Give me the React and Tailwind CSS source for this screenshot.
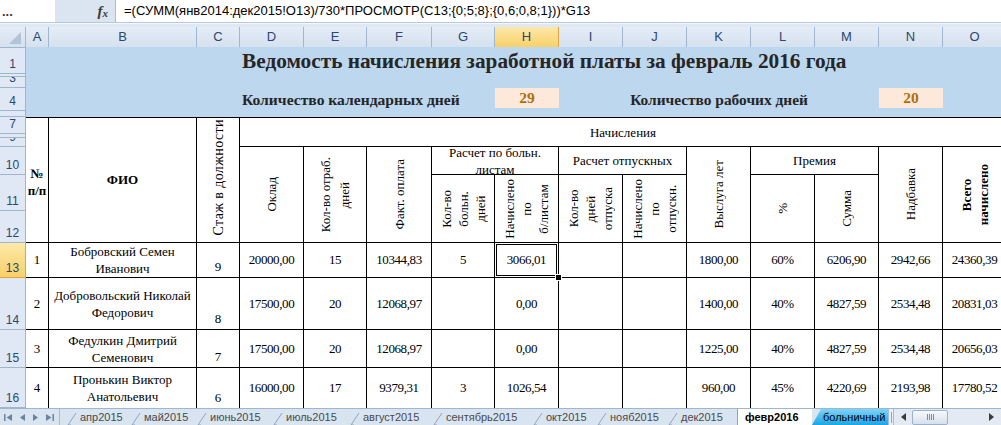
import React from 'react';

// column widths: row heads, A..O
const GRID_COLS =
  'grid-cols-[26px_23px_148px_43px_64px_63px_65px_63px_64px_64px_64px_64px_64px_64px_64px_64px]';

const LETTERS = ['A', 'B', 'C', 'D', 'E', 'F', 'G', 'H', 'I', 'J', 'K', 'L', 'M', 'N', 'O'];

const ROW_HEADS = [
  ['row-[1/2]', '1'],
  ['row-[2/3]', ''],
  ['row-[3/4]', '3'],
  ['row-[4/5]', '4'],
  ['row-[5/6]', ''],
  ['row-[6/7]', ''],
  ['row-[7/8]', '7'],
  ['row-[8/9]', ''],
  ['row-[9/10]', '9'],
  ['row-[10/11]', '10'],
  ['row-[11/12]', '11'],
  ['row-[12/13]', '12'],
  ['row-[13/14]', '13'],
  ['row-[14/15]', '14'],
  ['row-[15/16]', '15'],
  ['row-[16/17]', '16'],
];

const VCOLS = [
  'col-[5/6]', 'col-[6/7]', 'col-[7/8]', 'col-[8/9]', 'col-[9/10]', 'col-[10/11]',
  'col-[11/12]', 'col-[12/13]', 'col-[13/14]', 'col-[14/15]', 'col-[15/16]', 'col-[16/17]',
];

const PEOPLE = [
  {
    r: 'row-[13/14]', n: '1', fio: ['Бобровский Семен', 'Иванович'], st: '9',
    v: ['20000,00', '15', '10344,83', '5', '3066,01', '', '', '1800,00', '60%', '6206,90', '2942,66', '24360,39'],
  },
  {
    r: 'row-[14/15]', n: '2', fio: ['Добровольский Николай', 'Федорович'], st: '8',
    v: ['17500,00', '20', '12068,97', '', '0,00', '', '', '1400,00', '40%', '4827,59', '2534,48', '20831,03'],
  },
  {
    r: 'row-[15/16]', n: '3', fio: ['Федулкин Дмитрий', 'Семенович'], st: '7',
    v: ['17500,00', '20', '12068,97', '', '0,00', '', '', '1225,00', '40%', '4827,59', '2534,48', '20656,03'],
  },
  {
    r: 'row-[16/17]', n: '4', fio: ['Пронькин Виктор', 'Анатольевич'], st: '6',
    v: ['16000,00', '17', '9379,31', '3', '1026,54', '', '', '960,00', '45%', '4220,69', '2193,98', '17780,52'],
    last: true,
  },
];

const TABS = [
  { t: 'апр2015', w: 'w-[64px]' },
  { t: 'май2015', w: 'w-[66px]' },
  { t: 'июнь2015', w: 'w-[76px]' },
  { t: 'июль2015', w: 'w-[77px]' },
  { t: 'август2015', w: 'w-[83px]' },
  { t: 'сентябрь2015', w: 'w-[100px]' },
  { t: 'окт2015', w: 'w-[64px]' },
  { t: 'нояб2015', w: 'w-[71px]' },
  { t: 'дек2015', w: 'w-[69px]' },
];

const GOLD = 'bg-[linear-gradient(#fde9a9,#f8d06a)]';

function Cell({ pos, className = '', children }) {
  return (
    <div className={`${pos} border-b border-r border-black bg-white flex items-center justify-center text-center overflow-hidden ${className}`}>
      {children}
    </div>
  );
}

function VText({ lines, className = '' }) {
  return (
    <span className={`[writing-mode:vertical-rl] rotate-180 whitespace-nowrap text-center leading-[17px] ${className}`}>
      {lines.map((l, i) => (
        <React.Fragment key={i}>
          {i > 0 && <br />}
          {l}
        </React.Fragment>
      ))}
    </span>
  );
}

function Slant() {
  return (
    <svg width="10" height="17" viewBox="0 0 10 17" className="shrink-0">
      <path d="M1 16 L9 4" stroke="#8fa3bd" strokeWidth="1" fill="none" />
      <path d="M1 16 L4 16" stroke="#8fa3bd" strokeWidth="1" fill="none" />
    </svg>
  );
}

function DataRow({ p }) {
  const b = p.last ? 'border-b-0' : '';
  return (
    <>
      <Cell pos={`${p.r} col-[2/3]`} className={b}>{p.n}</Cell>
      <Cell pos={`${p.r} col-[3/4]`} className={`${b} leading-[17px] whitespace-nowrap`}>
        <div>
          <div>{p.fio[0]}</div>
          <div>{p.fio[1]}</div>
        </div>
      </Cell>
      <Cell pos={`${p.r} col-[4/5]`} className={`${b} items-end pb-[1px]`}>{p.st}</Cell>
      {p.v.map((val, i) => (
        <Cell key={i} pos={`${p.r} ${VCOLS[i]}`} className={`${b} tracking-[-0.4px] ${p.n === '1' && i === 4 ? 'relative overflow-visible' : ''}`}>
          {val}
          {p.n === '1' && i === 4 && (
            <>
              <span className="absolute -left-px -top-px -right-px -bottom-px border border-black shadow-[inset_0_0_0_1px_#fff,inset_0_0_0_2px_#000] pointer-events-none" />
              <span className="absolute -right-[4px] -bottom-[4px] w-[7px] h-[7px] bg-black border border-white" />
            </>
          )}
        </Cell>
      ))}
    </>
  );
}

export default function App() {
  return (
    <div className="w-[1001px] h-[425px] overflow-hidden bg-white text-black [font-family:'Liberation_Serif','Times_New_Roman',serif]">
      {/* formula bar */}
      <div className="flex h-[23px] bg-[#dbe5f1] border-b border-[#b8c8dc] [font-family:'Liberation_Sans',Arial,sans-serif]">
        <div className="w-[55px] bg-white flex items-center pl-[2px] text-[13px] font-bold text-[#4a3320] leading-none">...</div>
        <div className="w-[61px] flex items-center justify-end pr-[7px] border-r border-[#a9bdd4]">
          <span className="italic font-bold text-[15px] text-[#3a3a3a] [font-family:'Liberation_Serif',serif]">
            f<span className="text-[11px] relative top-[1px]">x</span>
          </span>
        </div>
        <div className="flex-1 bg-white flex items-center pl-[8px] text-[13px] whitespace-nowrap">
          =(СУММ(янв2014:дек2015!O13)/730*ПРОСМОТР(C13;{'{'}0;5;8{'}'};{'{'}0,6;0,8;1{'}'}))*G13
        </div>
      </div>
      <div className="h-[4px] bg-[#dfe8f3] border-t border-[#f4f7fb]" />

      {/* column letters */}
      <div className={`grid ${GRID_COLS} h-[20px] text-[13px] text-[#2c4770] [font-family:'Liberation_Sans',Arial,sans-serif]`}>
        <div className="relative bg-[linear-gradient(#e4ecf7,#d6e1ef)] border-r border-b border-[#9eb6ce]">
          <svg width="14" height="14" viewBox="0 0 14 14" className="absolute right-[3px] bottom-[2px]">
            <polygon points="13,1 13,13 1,13" fill="#b3c2d6" />
          </svg>
        </div>
        {LETTERS.map((l) => (
          <div
            key={l}
            className={`flex items-center justify-center border-r border-b ${
              l === 'H'
                ? `${GOLD} border-[#e0a53d]`
                : 'bg-[linear-gradient(#e4ecf7,#d6e1ef)] border-[#9eb6ce]'
            }`}
          >
            {l}
          </div>
        ))}
      </div>

      {/* sheet body */}
      <div
        className={`grid ${GRID_COLS} grid-rows-[27px_3px_11px_23px_2px_4px_17px_4px_9px_28px_36px_32px_35px_52px_38px_40px] h-[361px] overflow-hidden text-[13px]`}
      >
        {ROW_HEADS.map(([r, t]) => (
          <div
            key={r}
            className={`${r} col-[1/2] flex items-end justify-center pb-[2px] overflow-hidden leading-[14px] text-[12px] text-[#2c4770] border-r border-b [font-family:'Liberation_Sans',Arial,sans-serif] ${
              t === '13' ? `${GOLD} border-[#e0a53d]` : 'bg-[#dfe8f4] border-[#9eb6ce]'
            }`}
          >
            {t}
          </div>
        ))}

        {/* blue title band */}
        <div className="col-[2/17] row-[1/7] bg-[#bdd7ee]" />
        <div className="col-[2/17] row-[1/2] flex items-center pl-[216px] pt-[3px] text-[21.3px] font-bold text-[#262626] whitespace-nowrap">
          Ведомость начисления заработной платы за февраль 2016 года
        </div>
        <div className="col-[5/9] row-[4/5] flex items-center pl-[2px] text-[15.6px] font-bold text-[#262626] whitespace-nowrap">
          Количество календарных дней
        </div>
        <div className="col-[9/10] row-[4/5] flex items-start">
          <div className="h-[20px] w-full bg-[#fde9d9] flex items-center justify-center text-[15.5px] font-bold text-[#b06d0c]">29</div>
        </div>
        <div className="col-[10/15] row-[4/5] flex items-center justify-center text-[15.4px] font-bold text-[#262626] whitespace-nowrap">
          Количество рабочих дней
        </div>
        <div className="col-[15/16] row-[4/5] flex items-start">
          <div className="h-[20px] w-full bg-[#fde9d9] flex items-center justify-center text-[15.5px] font-bold text-[#b06d0c]">20</div>
        </div>

        {/* table header */}
        <Cell pos="col-[2/3] row-[7/13]" className="border-t font-bold leading-[17px] pt-[4px]">
          <div>№<br />п/п</div>
        </Cell>
        <Cell pos="col-[3/4] row-[7/13]" className="border-t font-bold">ФИО</Cell>
        <Cell pos="col-[4/5] row-[7/13]" className="border-t items-end pb-[6px]">
          <VText lines={['Стаж в должности']} className="text-[14px] tracking-[0.4px]" />
        </Cell>
        <Cell pos="col-[5/17] row-[7/10]" className="border-t pt-[2px]">Начисления</Cell>
        <Cell pos="col-[5/6] row-[10/13]"><VText lines={['Оклад']} /></Cell>
        <Cell pos="col-[6/7] row-[10/13]"><VText lines={['Кол-во отраб.', 'дней']} className="leading-[19px]" /></Cell>
        <Cell pos="col-[7/8] row-[10/13]"><VText lines={['Факт. оплата']} /></Cell>
        <Cell pos="col-[8/10] row-[10/11]" className="leading-[17px] whitespace-nowrap">
          <div>Расчет по больн.<br />листам</div>
        </Cell>
        <Cell pos="col-[8/9] row-[11/13]"><VText lines={['Кол-во', 'больн.', 'дней']} /></Cell>
        <Cell pos="col-[9/10] row-[11/13]"><VText lines={['Начислено', 'по', 'б/листам']} /></Cell>
        <Cell pos="col-[10/12] row-[10/11]" className="whitespace-nowrap">Расчет отпускных</Cell>
        <Cell pos="col-[10/11] row-[11/13]"><VText lines={['Кол-во', 'дней', 'отпуска']} /></Cell>
        <Cell pos="col-[11/12] row-[11/13]"><VText lines={['Начислено', 'по', 'отпускн.']} /></Cell>
        <Cell pos="col-[12/13] row-[10/13]"><VText lines={['Выслуга лет']} /></Cell>
        <Cell pos="col-[13/15] row-[10/11]">Премия</Cell>
        <Cell pos="col-[13/14] row-[11/13]"><VText lines={['%']} /></Cell>
        <Cell pos="col-[14/15] row-[11/13]"><VText lines={['Сумма']} /></Cell>
        <Cell pos="col-[15/16] row-[10/13]"><VText lines={['Надбавка']} /></Cell>
        <Cell pos="col-[16/17] row-[10/13]"><VText lines={['Всего', 'начислено']} className="font-bold leading-[15px]" /></Cell>

        {PEOPLE.map((p) => (
          <DataRow key={p.n} p={p} />
        ))}
      </div>

      {/* sheet tabs */}
      <div className="flex h-[17px] bg-[#d9e4f1] border-t border-[#9eb6ce] text-[11px] text-[#4a4a4a] [font-family:'Liberation_Sans',Arial,sans-serif]">
        <div className="w-[60px] flex items-center gap-[6px] pl-[4px] border-r border-[#aabbd2]">
          <svg width="9" height="9" viewBox="0 0 9 9"><rect x="0" y="1" width="1.5" height="7" fill="#6f829c" /><polygon points="8,1 8,8 2.5,4.5" fill="#6f829c" /></svg>
          <svg width="7" height="9" viewBox="0 0 7 9"><polygon points="6,1 6,8 1,4.5" fill="#6f829c" /></svg>
          <svg width="7" height="9" viewBox="0 0 7 9"><polygon points="1,1 1,8 6,4.5" fill="#6f829c" /></svg>
          <svg width="9" height="9" viewBox="0 0 9 9"><polygon points="1,1 1,8 6.5,4.5" fill="#6f829c" /><rect x="7.5" y="1" width="1.5" height="7" fill="#6f829c" /></svg>
        </div>
        <div className="w-[7px]" />
        {TABS.map((t) => (
          <div key={t.t} className={`${t.w} flex items-center shrink-0`}>
            <Slant />
            <span className="ml-[3px] whitespace-nowrap">{t.t}</span>
          </div>
        ))}
        <div className="w-[75px] shrink-0 flex items-center bg-white border-l border-[#8fa3bd] pl-[7px] font-bold text-black">
          февр2016
        </div>
        <div className="w-[76px] shrink-0 flex items-center pl-[11px] text-black bg-[linear-gradient(#7fd3f7,#19a6e6)] [clip-path:polygon(9px_0,100%_0,100%_100%,0_100%)]">
          больничный
        </div>
        <div className="w-[6px] shrink-0 flex items-center justify-center bg-[#e8eef6] border-x border-[#aabbd2]">
          <div className="w-px h-[11px] bg-[#8fa3bd]" />
        </div>
        <div className="flex-1 flex items-center bg-[#e3eaf3] pl-[2px] pr-[3px]">
          <div className="w-[14px] h-[15px] flex items-center justify-center">
            <svg width="5" height="8" viewBox="0 0 5 8"><polygon points="5,0 5,8 0,4" fill="#3b3b3b" /></svg>
          </div>
          <div className="ml-[2px] w-[36px] h-[15px] rounded-[2px] border border-[#9eb0c8] bg-[linear-gradient(#f6f9fd,#d6e0ec)] flex items-center justify-center gap-[1px]">
            <div className="w-px h-[6px] bg-[#7a8ca6]" />
            <div className="w-px h-[6px] bg-[#7a8ca6]" />
            <div className="w-px h-[6px] bg-[#7a8ca6]" />
            <div className="w-px h-[6px] bg-[#7a8ca6]" />
          </div>
          <div className="flex-1" />
          <div className="w-[14px] h-[15px] flex items-center justify-center">
            <svg width="5" height="8" viewBox="0 0 5 8"><polygon points="0,0 0,8 5,4" fill="#3b3b3b" /></svg>
          </div>
        </div>
      </div>
    </div>
  );
}
